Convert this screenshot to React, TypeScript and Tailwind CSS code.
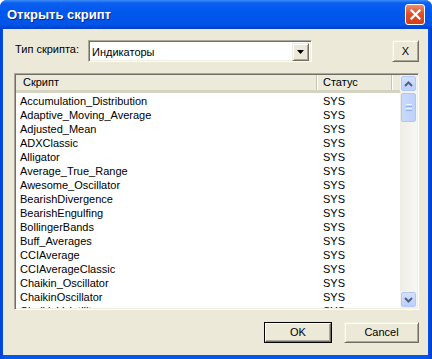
import React from "react";

const rows = [
  "Accumulation_Distribution",
  "Adaptive_Moving_Average",
  "Adjusted_Mean",
  "ADXClassic",
  "Alligator",
  "Average_True_Range",
  "Awesome_Oscillator",
  "BearishDivergence",
  "BearishEngulfing",
  "BollingerBands",
  "Buff_Averages",
  "CCIAverage",
  "CCIAverageClassic",
  "Chaikin_Oscillator",
  "ChaikinOscillator",
  "ChaikinVolatility",
];

function ScrollBtn({ up }: { up: boolean }) {
  return (
    <div className="h-[17px] w-[17px] p-[1px] bg-[#f3f2ec]">
      <div className="h-full w-full rounded-[2px] border border-[#b4c8f6] bg-[linear-gradient(to_bottom,#d3e0fd,#bccffb)] flex items-center justify-center">
        <svg width="9" height="6" viewBox="0 0 9 6">
          {up ? (
            <path d="M1 5 L4.5 1.5 L8 5" stroke="#4d6185" strokeWidth="2" fill="none" />
          ) : (
            <path d="M1 1 L4.5 4.5 L8 1" stroke="#4d6185" strokeWidth="2" fill="none" />
          )}
        </svg>
      </div>
    </div>
  );
}

export default function App() {
  return (
    <div className="w-[432px] h-[359px] bg-white font-['Liberation_Sans',Arial,sans-serif] text-[11px] text-black">
      <div className="w-full h-full flex flex-col rounded-t-[7px] overflow-hidden bg-[linear-gradient(to_right,#0040d8,#0058ee_1%,#0058ee_99%,#0038c8)]">
        {/* Title bar */}
        <div className="h-[29px] flex items-center pl-[7px] pr-[7px] bg-[linear-gradient(to_bottom,#3f8ef8_0%,#0a5ff0_10%,#0058ee_40%,#0054e6_85%,#003fd0_100%)]">
          <span className="text-white text-[13px] font-bold leading-none [text-shadow:1px_1px_0_#0a2a8a]">
            Открыть скрипт
          </span>
          <div className="ml-auto w-[20px] h-[21px] rounded-[3px] border border-white bg-[linear-gradient(to_bottom,#ef8c6e,#e05028_45%,#d2401a)] flex items-center justify-center">
            <svg width="11" height="11" viewBox="0 0 11 11">
              <path d="M1.5 1.5 L9.5 9.5 M9.5 1.5 L1.5 9.5" stroke="white" strokeWidth="2.2" strokeLinecap="square" />
            </svg>
          </div>
        </div>

        {/* Body */}
        <div className="flex-1 ml-[3px] mr-[4px] mb-[4px] bg-[#ece9d8] flex flex-col pt-[11px] pl-[11px] pr-[9px] pb-[12px]">
          {/* Row 1 */}
          <div className="h-[22px] flex items-start">
            <div className="w-[74px] pt-[2px] pl-[1px] leading-[14px]">Тип скрипта:</div>
            <div className="w-[224px] h-[22px] border border-t-[#aca899] border-l-[#aca899] border-b-white border-r-white shadow-[inset_1px_1px_0_#716f64,inset_-1px_-1px_0_#f1efe2] bg-white p-[2px] flex">
              <div className="flex-1 pl-[1px] leading-[18px] h-[18px]">Индикаторы</div>
              <div className="w-[17px] h-[18px] border border-t-[#f1efe2] border-l-[#f1efe2] border-b-[#716f64] border-r-[#716f64] shadow-[inset_1px_1px_0_#fff,inset_-1px_-1px_0_#aca899] bg-[#ece9d8] flex items-center justify-center">
                <svg width="7" height="4" viewBox="0 0 7 4">
                  <path d="M0 0 H7 L3.5 4 Z" fill="black" />
                </svg>
              </div>
            </div>
            <div className="ml-auto w-[27px] h-[22px] border border-t-[#f1efe2] border-l-[#f1efe2] border-b-[#716f64] border-r-[#716f64] shadow-[inset_1px_1px_0_#fff,inset_-1px_-1px_0_#aca899] flex items-center justify-center leading-none">
              X
            </div>
          </div>

          {/* List */}
          <div className="mt-[11px] h-[237px] border border-t-[#aca899] border-l-[#aca899] border-b-white border-r-white shadow-[inset_1px_1px_0_#716f64,inset_-1px_-1px_0_#f1efe2] p-[1px] flex">
            <div className="flex-1 bg-white flex min-w-0">
              <div className="flex-1 min-w-0 overflow-hidden flex flex-col">
                <div className="h-[18px] flex shrink-0 bg-[#ebeadb] border-b-[3px] border-[#d6d2c2]">
                  <div className="w-[301px] pl-[7px] leading-[15px] border-r border-[#c7c5b2] shadow-[1px_0_0_#fff]">Скрипт</div>
                  <div className="w-[75px] pl-[6px] leading-[15px] border-r border-[#c7c5b2] shadow-[1px_0_0_#fff]">Статус</div>
                  <div className="flex-1" />
                </div>
                <div className="pt-[1px] flex flex-col shrink-0">
                  {rows.map((r) => (
                    <div key={r} className="h-[14px] flex shrink-0 leading-[14px] whitespace-nowrap">
                      <div className="w-[301px] pl-[4px]">{r}</div>
                      <div className="w-[75px] pl-[6px]">SYS</div>
                    </div>
                  ))}
                </div>
              </div>
              <div className="w-[17px] flex flex-col bg-[linear-gradient(to_right,#eeede5,#f8f7f3)]">
                <ScrollBtn up={true} />
                <div className="h-[31px] w-[17px] p-[1px]">
                  <div className="h-full w-full rounded-[2px] border border-[#b0c6f4] bg-[linear-gradient(to_right,#c9d9fd,#bed1fb)] flex flex-col items-center justify-center gap-[1px]">
                    <div className="w-[6px] h-[1px] bg-[#eef3fe]" />
                    <div className="w-[6px] h-[1px] bg-[#8cb0f8]" />
                    <div className="w-[6px] h-[1px] bg-[#eef3fe]" />
                    <div className="w-[6px] h-[1px] bg-[#8cb0f8]" />
                  </div>
                </div>
                <div className="flex-1" />
                <ScrollBtn up={false} />
              </div>
            </div>
          </div>

          {/* Buttons */}
          <div className="mt-[12px] h-[21px] flex justify-end gap-[12px]">
            <div className="w-[68px] h-[21px] border border-black">
              <div className="h-full w-full border border-t-[#fff] border-l-[#fff] border-b-[#716f64] border-r-[#716f64] shadow-[inset_-1px_-1px_0_#aca899] flex items-center justify-center leading-none">
                OK
              </div>
            </div>
            <div className="w-[75px] h-[21px] border border-t-[#f1efe2] border-l-[#f1efe2] border-b-[#716f64] border-r-[#716f64] shadow-[inset_1px_1px_0_#fff,inset_-1px_-1px_0_#aca899] flex items-center justify-center leading-none">
              Cancel
            </div>
          </div>
        </div>
      </div>
    </div>
  );
}
